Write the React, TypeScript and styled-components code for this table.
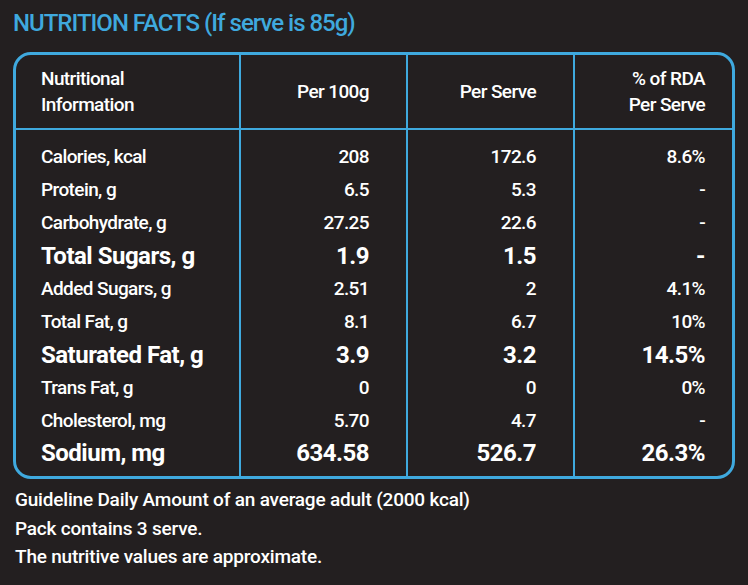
import React from "react";
import styled, { createGlobalStyle } from "styled-components";

const GlobalStyle = createGlobalStyle`
  html, body {
    margin: 0;
    padding: 0;
    background: #231f20;
  }
  body {
    font-family: Roboto, "Liberation Sans", sans-serif;
    color: #ffffff;
  }
`;

const BLUE = "#3fa9de";

const Page = styled.div`
  width: 748px;
  height: 585px;
  box-sizing: border-box;
  padding: 7px 13px 0 13px;
  background: #231f20;
`;

const Title = styled.h1`
  margin: 0;
  font-size: 24px;
  line-height: 32px;
  font-weight: 500;
  letter-spacing: -1px;
  color: ${BLUE};
`;

const Table = styled.div`
  margin-top: 13px;
  width: 722px;
  height: 427px;
  box-sizing: border-box;
  border: 3px solid ${BLUE};
  border-radius: 18px;
  overflow: hidden;
  display: flex;
  flex-direction: column;
`;

const HeaderRow = styled.div`
  display: grid;
  grid-template-columns: 223px 167px 167px 159px;
  height: 73px;
  border-bottom: 2px solid ${BLUE};
`;

const Body = styled.div`
  flex: 1;
  display: flex;
  flex-direction: column;
`;

const Row = styled.div`
  display: grid;
  grid-template-columns: 223px 167px 167px 159px;
  height: 33px;

  &:first-child {
    height: 43px;
  }
  &:first-child > div {
    padding-top: 10px;
  }
  &:last-child {
    flex: 1;
  }
  &:last-child > div {
    padding-bottom: 7px;
  }
`;

const Cell = styled.div<{ $col: number; $bold?: boolean }>`
  display: flex;
  align-items: center;
  justify-content: ${(p) => (p.$col === 0 ? "flex-start" : "flex-end")};
  box-sizing: border-box;
  padding-left: ${(p) => (p.$col === 0 ? "25px" : "0")};
  padding-right: ${(p) => (p.$col === 3 ? "27px" : p.$col === 0 ? "0" : "37px")};
  border-left: ${(p) => (p.$col === 0 ? "none" : `2px solid ${BLUE}`)};
  font-size: ${(p) => (p.$bold ? "24px" : "19px")};
  font-weight: ${(p) => (p.$bold ? 700 : 500)};
  letter-spacing: ${(p) => (p.$bold ? "-0.5px" : "-0.6px")};
  text-align: ${(p) => (p.$col === 0 ? "left" : "right")};
  line-height: 26px;
  white-space: nowrap;
`;

const HeadText = styled.span`
  white-space: pre-line;
`;

const Notes = styled.div`
  margin-top: 7px;
  padding-left: 2px;
  font-size: 19px;
  font-weight: 500;
  letter-spacing: -0.2px;
  line-height: 28.5px;
`;

type Nutrient = {
  name: string;
  per100: string;
  perServe: string;
  rda: string;
  bold?: boolean;
};

const rows: Nutrient[] = [
  { name: "Calories, kcal", per100: "208", perServe: "172.6", rda: "8.6%" },
  { name: "Protein, g", per100: "6.5", perServe: "5.3", rda: "-" },
  { name: "Carbohydrate, g", per100: "27.25", perServe: "22.6", rda: "-" },
  { name: "Total Sugars, g", per100: "1.9", perServe: "1.5", rda: "-", bold: true },
  { name: "Added Sugars, g", per100: "2.51", perServe: "2", rda: "4.1%" },
  { name: "Total Fat, g", per100: "8.1", perServe: "6.7", rda: "10%" },
  { name: "Saturated Fat, g", per100: "3.9", perServe: "3.2", rda: "14.5%", bold: true },
  { name: "Trans Fat, g", per100: "0", perServe: "0", rda: "0%" },
  { name: "Cholesterol, mg", per100: "5.70", perServe: "4.7", rda: "-" },
  { name: "Sodium, mg", per100: "634.58", perServe: "526.7", rda: "26.3%", bold: true },
];

const headers = ["Nutritional\nInformation", "Per 100g", "Per Serve", "% of RDA\nPer Serve"];

export default function App() {
  return (
    <Page>
      <GlobalStyle />
      <Title>NUTRITION FACTS (If serve is 85g)</Title>
      <Table>
        <HeaderRow>
          {headers.map((h, i) => (
            <Cell key={h} $col={i}>
              <HeadText>{h}</HeadText>
            </Cell>
          ))}
        </HeaderRow>
        <Body>
          {rows.map((r) => (
            <Row key={r.name}>
              <Cell $col={0} $bold={r.bold}>{r.name}</Cell>
              <Cell $col={1} $bold={r.bold}>{r.per100}</Cell>
              <Cell $col={2} $bold={r.bold}>{r.perServe}</Cell>
              <Cell $col={3} $bold={r.bold}>{r.rda}</Cell>
            </Row>
          ))}
        </Body>
      </Table>
      <Notes>
        Guideline Daily Amount of an average adult (2000 kcal)
        <br />
        Pack contains 3 serve.
        <br />
        The nutritive values are approximate.
      </Notes>
    </Page>
  );
}
